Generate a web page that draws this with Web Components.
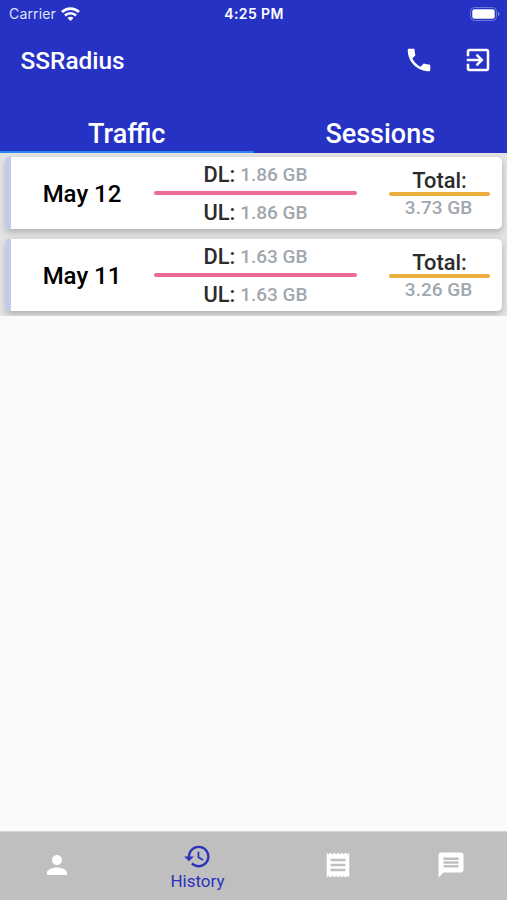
<!DOCTYPE html>
<html lang="en">
<head>
<meta charset="utf-8">
<title>SSRadius</title>
<style>
    body {
        margin: 0;
        font-family: Roboto, "Liberation Sans", sans-serif;
    }
</style>
</head>
<body>
<radius-app></radius-app>

<script>
const ICONS = {
    phone: 'M6.62 10.79c1.44 2.83 3.76 5.14 6.59 6.59l2.2-2.2c.27-.27.67-.36 1.02-.24 1.12.37 2.33.57 3.57.57.55 0 1 .45 1 1V20c0 .55-.45 1-1 1-9.39 0-17-7.61-17-17 0-.55.45-1 1-1h3.5c.55 0 1 .45 1 1 0 1.25.2 2.45.57 3.57.11.35.03.74-.25 1.02l-2.2 2.2z',
    exit: 'M10.09 15.59L11.5 17l5-5-5-5-1.41 1.41L12.67 11H3v2h9.67l-2.58 2.59zM19 3H5c-1.11 0-2 .9-2 2v4h2V5h14v14H5v-4H3v4c0 1.1.89 2 2 2h14c1.1 0 2-.9 2-2V5c0-1.1-.9-2-2-2z',
    person: 'M12 12c2.21 0 4-1.79 4-4s-1.79-4-4-4-4 1.79-4 4 1.79 4 4 4zm0 2c-2.67 0-8 1.34-8 4v2h16v-2c0-2.66-5.33-4-8-4z',
    history: 'M13 3c-4.97 0-9 4.03-9 9H1l3.89 3.89.07.14L9 12H6c0-3.87 3.13-7 7-7s7 3.13 7 7-3.13 7-7 7c-1.93 0-3.68-.79-4.94-2.06l-1.42 1.42C8.27 19.99 10.51 21 13 21c4.97 0 9-4.03 9-9s-4.03-9-9-9zm-1 5v5l4.28 2.54.72-1.21-3.5-2.08V8H12z',
    receipt: 'M18 17H6v-2h12v2zm0-4H6v-2h12v2zm0-4H6V7h12v2zM3 22l1.5-1.5L6 22l1.5-1.5L9 22l1.5-1.5L12 22l1.5-1.5L15 22l1.5-1.5L18 22l1.5-1.5L21 22V2l-1.5 1.5L18 2l-1.5 1.5L15 2l-1.5 1.5L12 2l-1.5 1.5L9 2 7.5 3.5 6 2 4.5 3.5 3 2v20z',
    message: 'M20 2H4c-1.1 0-1.99.9-1.99 2L2 22l4-4h14c1.1 0 2-.9 2-2V4c0-1.1-.9-2-2-2zm-2 12H6v-2h12v2zm0-3H6V9h12v2zm0-3H6V6h12v2z'
};

class MdIcon extends HTMLElement {
    constructor() {
        super();
        this.attachShadow({ mode: 'open' });
    }

    connectedCallback() {
        this.shadowRoot.innerHTML = `
            <style>
                :host { display: block; width: 30px; height: 30px; }
                svg { display: block; width: 100%; height: 100%; fill: currentColor; }
            </style>
            <svg viewBox="0 0 24 24"><path d="${ICONS[this.getAttribute('name')]}"/></svg>
        `;
    }
}
customElements.define('md-icon', MdIcon);

class StatusBar extends HTMLElement {
    constructor() {
        super();
        this.attachShadow({ mode: 'open' }).innerHTML = `
            <style>
                :host {
                    display: grid;
                    grid-template-columns: 1fr auto 1fr;
                    align-items: center;
                    height: 27px;
                    padding: 0 7px 0 9px;
                    color: #fff;
                    font-family: Inter, "Liberation Sans", sans-serif;
                    font-size: 14px;
                }
                .left { display: flex; align-items: center; gap: 5px; color: #dfe2fb; letter-spacing: 0.15px; }
                .time { margin-right: 1px; font-weight: 600; letter-spacing: 0.4px; }
                .battery { justify-self: end; display: block; }
                svg { display: block; }
            </style>
            <div class="left">
                <span>Carrier</span>
                <svg width="19" height="14" viewBox="0 0 19 14" fill="none" stroke="#fff" stroke-width="2.8">
                    <path d="M1 5a12.2 12.2 0 0 1 17 0"/>
                    <path d="M4 8.5a7.8 7.8 0 0 1 11 0" stroke-width="2.5"/>
                    <path d="M9.5 14L6.5 11a4.2 4.2 0 0 1 6 0z" fill="#fff" stroke="none"/>
                </svg>
            </div>
            <span class="time">4:25 PM</span>
            <svg class="battery" width="30" height="14" viewBox="0 0 30 14">
                <rect x=".5" y=".5" width="26" height="13" rx="4" fill="none" stroke="#7077d9"/>
                <rect x="2.3" y="2.3" width="22.4" height="9.4" rx="2.2" fill="#fff"/>
                <path d="M28 4.8c2 .7 2 3.7 0 4.4z" fill="#7f86e0"/>
            </svg>
        `;
    }
}
customElements.define('status-bar', StatusBar);

class AppBar extends HTMLElement {
    constructor() {
        super();
        this.attachShadow({ mode: 'open' }).innerHTML = `
            <style>
                :host {
                    display: flex;
                    align-items: center;
                    height: 66px;
                    padding: 0 14.5px 0 20.5px;
                    color: #fff;
                }
                h1 { flex: 1; margin: 0; padding-top: 1px; font-size: 24.4px; font-weight: 500; line-height: 30px; }
                .actions { display: flex; gap: 28.5px; }
            </style>
            <h1><slot></slot></h1>
            <div class="actions"><slot name="action"></slot></div>
        `;
    }
}
customElements.define('app-bar', AppBar);

class TabItem extends HTMLElement {
    constructor() {
        super();
        this.attachShadow({ mode: 'open' }).innerHTML = `
            <style>
                :host {
                    display: flex;
                    flex: 1;
                    box-sizing: border-box;
                    align-items: flex-end;
                    justify-content: center;
                    height: 59.5px;
                    border-bottom: 2px solid transparent;
                    color: #fff;
                    font-size: 27px;
                    font-weight: 500;
                    line-height: 34px;
                }
                :host([active]) { border-bottom-color: #2a86ec; }
            </style>
            <slot></slot>
        `;
    }
}
customElements.define('tab-item', TabItem);

class UsageCard extends HTMLElement {
    constructor() {
        super();
        this.attachShadow({ mode: 'open' });
    }

    connectedCallback() {
        this.shadowRoot.innerHTML = `
            <style>
                :host {
                    display: flex;
                    box-sizing: border-box;
                    align-items: center;
                    height: 72px;
                    padding-right: 12px;
                    border-left: 5px solid #c2cbf0;
                    border-radius: 3px 5px 5px 3px;
                    background: #fff;
                    box-shadow: 0 3px 7px rgba(0, 0, 0, 0.24);
                    font-weight: 500;
                }
                .date { width: 142px; margin-right: 1px; text-align: center; font-size: 24px; line-height: 28px; color: #000; padding-top: 2px; }
                .traffic { width: 203px; text-align: center; }
                .total { width: 101px; margin-left: auto; text-align: center; }
                .row { display: flex; align-items: center; justify-content: center; gap: 5px; height: 33px; padding-top: 1px; line-height: 33px; white-space: nowrap; }
                .row.down { height: 32px; padding-top: 2px; line-height: 32px; }
                .label { font-size: 21.8px; color: #2b2b2b; }
                .value { font-size: 19px; color: #a0a7ae; }
                .line { height: 4px; border-radius: 2px; }
                .pink { background: #ec6a96; }
                .amber { background: #ebae3c; }
                .total .label { padding-top: 4px; line-height: 23px; }
                .total .value { margin: 0 2px 2px 0; line-height: 23px; }
            </style>
            <div class="date">${this.getAttribute('date')}</div>
            <div class="traffic">
                <div class="row down"><span class="label">DL:</span> <span class="value">${this.getAttribute('dl')}</span></div>
                <div class="line pink"></div>
                <div class="row"><span class="label">UL:</span> <span class="value">${this.getAttribute('ul')}</span></div>
            </div>
            <div class="total">
                <div class="label">Total:</div>
                <div class="line amber"></div>
                <div class="value">${this.getAttribute('total')}</div>
            </div>
        `;
    }
}
customElements.define('usage-card', UsageCard);

class NavItem extends HTMLElement {
    constructor() {
        super();
        this.attachShadow({ mode: 'open' });
    }

    connectedCallback() {
        this.shadowRoot.innerHTML = `
            <style>
                :host {
                    display: flex;
                    flex: 1;
                    flex-direction: column;
                    align-items: center;
                    justify-content: center;
                    padding-bottom: 2px;
                    color: #fff;
                    font-size: 17px;
                    line-height: 20px;
                }
                :host([active]) { flex: 1.5; padding-bottom: 0; color: #2a33bd; }
                :host([active]) md-icon { width: 29px; height: 29px; }
            </style>
            <md-icon name="${this.getAttribute('icon')}"></md-icon>
            <slot></slot>
        `;
    }
}
customElements.define('nav-item', NavItem);

class RadiusApp extends HTMLElement {
    constructor() {
        super();
        this.attachShadow({ mode: 'open' }).innerHTML = `
            <style>
                :host { display: flex; flex-direction: column; height: 900px; background: #fafafa; }
                header { background: #2632c4; }
                .tabs { display: flex; }
                .list {
                    display: flex;
                    flex-direction: column;
                    gap: 10px;
                    padding: 4.5px 5px 5px 6px;
                    background: #e4e4e4;
                    overflow: hidden;
                }
                main { flex: 1; }
                nav { display: flex; height: 68px; padding-left: 0.5px; background: #bfbfbf; border-top: 1px solid #d4d4d4; }
            </style>
            <header>
                <status-bar></status-bar>
                <app-bar>
                    SSRadius
                    <md-icon slot="action" name="phone"></md-icon>
                    <md-icon slot="action" name="exit"></md-icon>
                </app-bar>
                <div class="tabs">
                    <tab-item active>Traffic</tab-item>
                    <tab-item>Sessions</tab-item>
                </div>
            </header>
            <main>
                <div class="list">
                    <usage-card date="May 12" dl="1.86 GB" ul="1.86 GB" total="3.73 GB"></usage-card>
                    <usage-card date="May 11" dl="1.63 GB" ul="1.63 GB" total="3.26 GB"></usage-card>
                </div>
            </main>
            <nav>
                <nav-item icon="person"></nav-item>
                <nav-item icon="history" active>History</nav-item>
                <nav-item icon="receipt"></nav-item>
                <nav-item icon="message"></nav-item>
            </nav>
        `;
    }
}
customElements.define('radius-app', RadiusApp);
</script>
</body>
</html>
